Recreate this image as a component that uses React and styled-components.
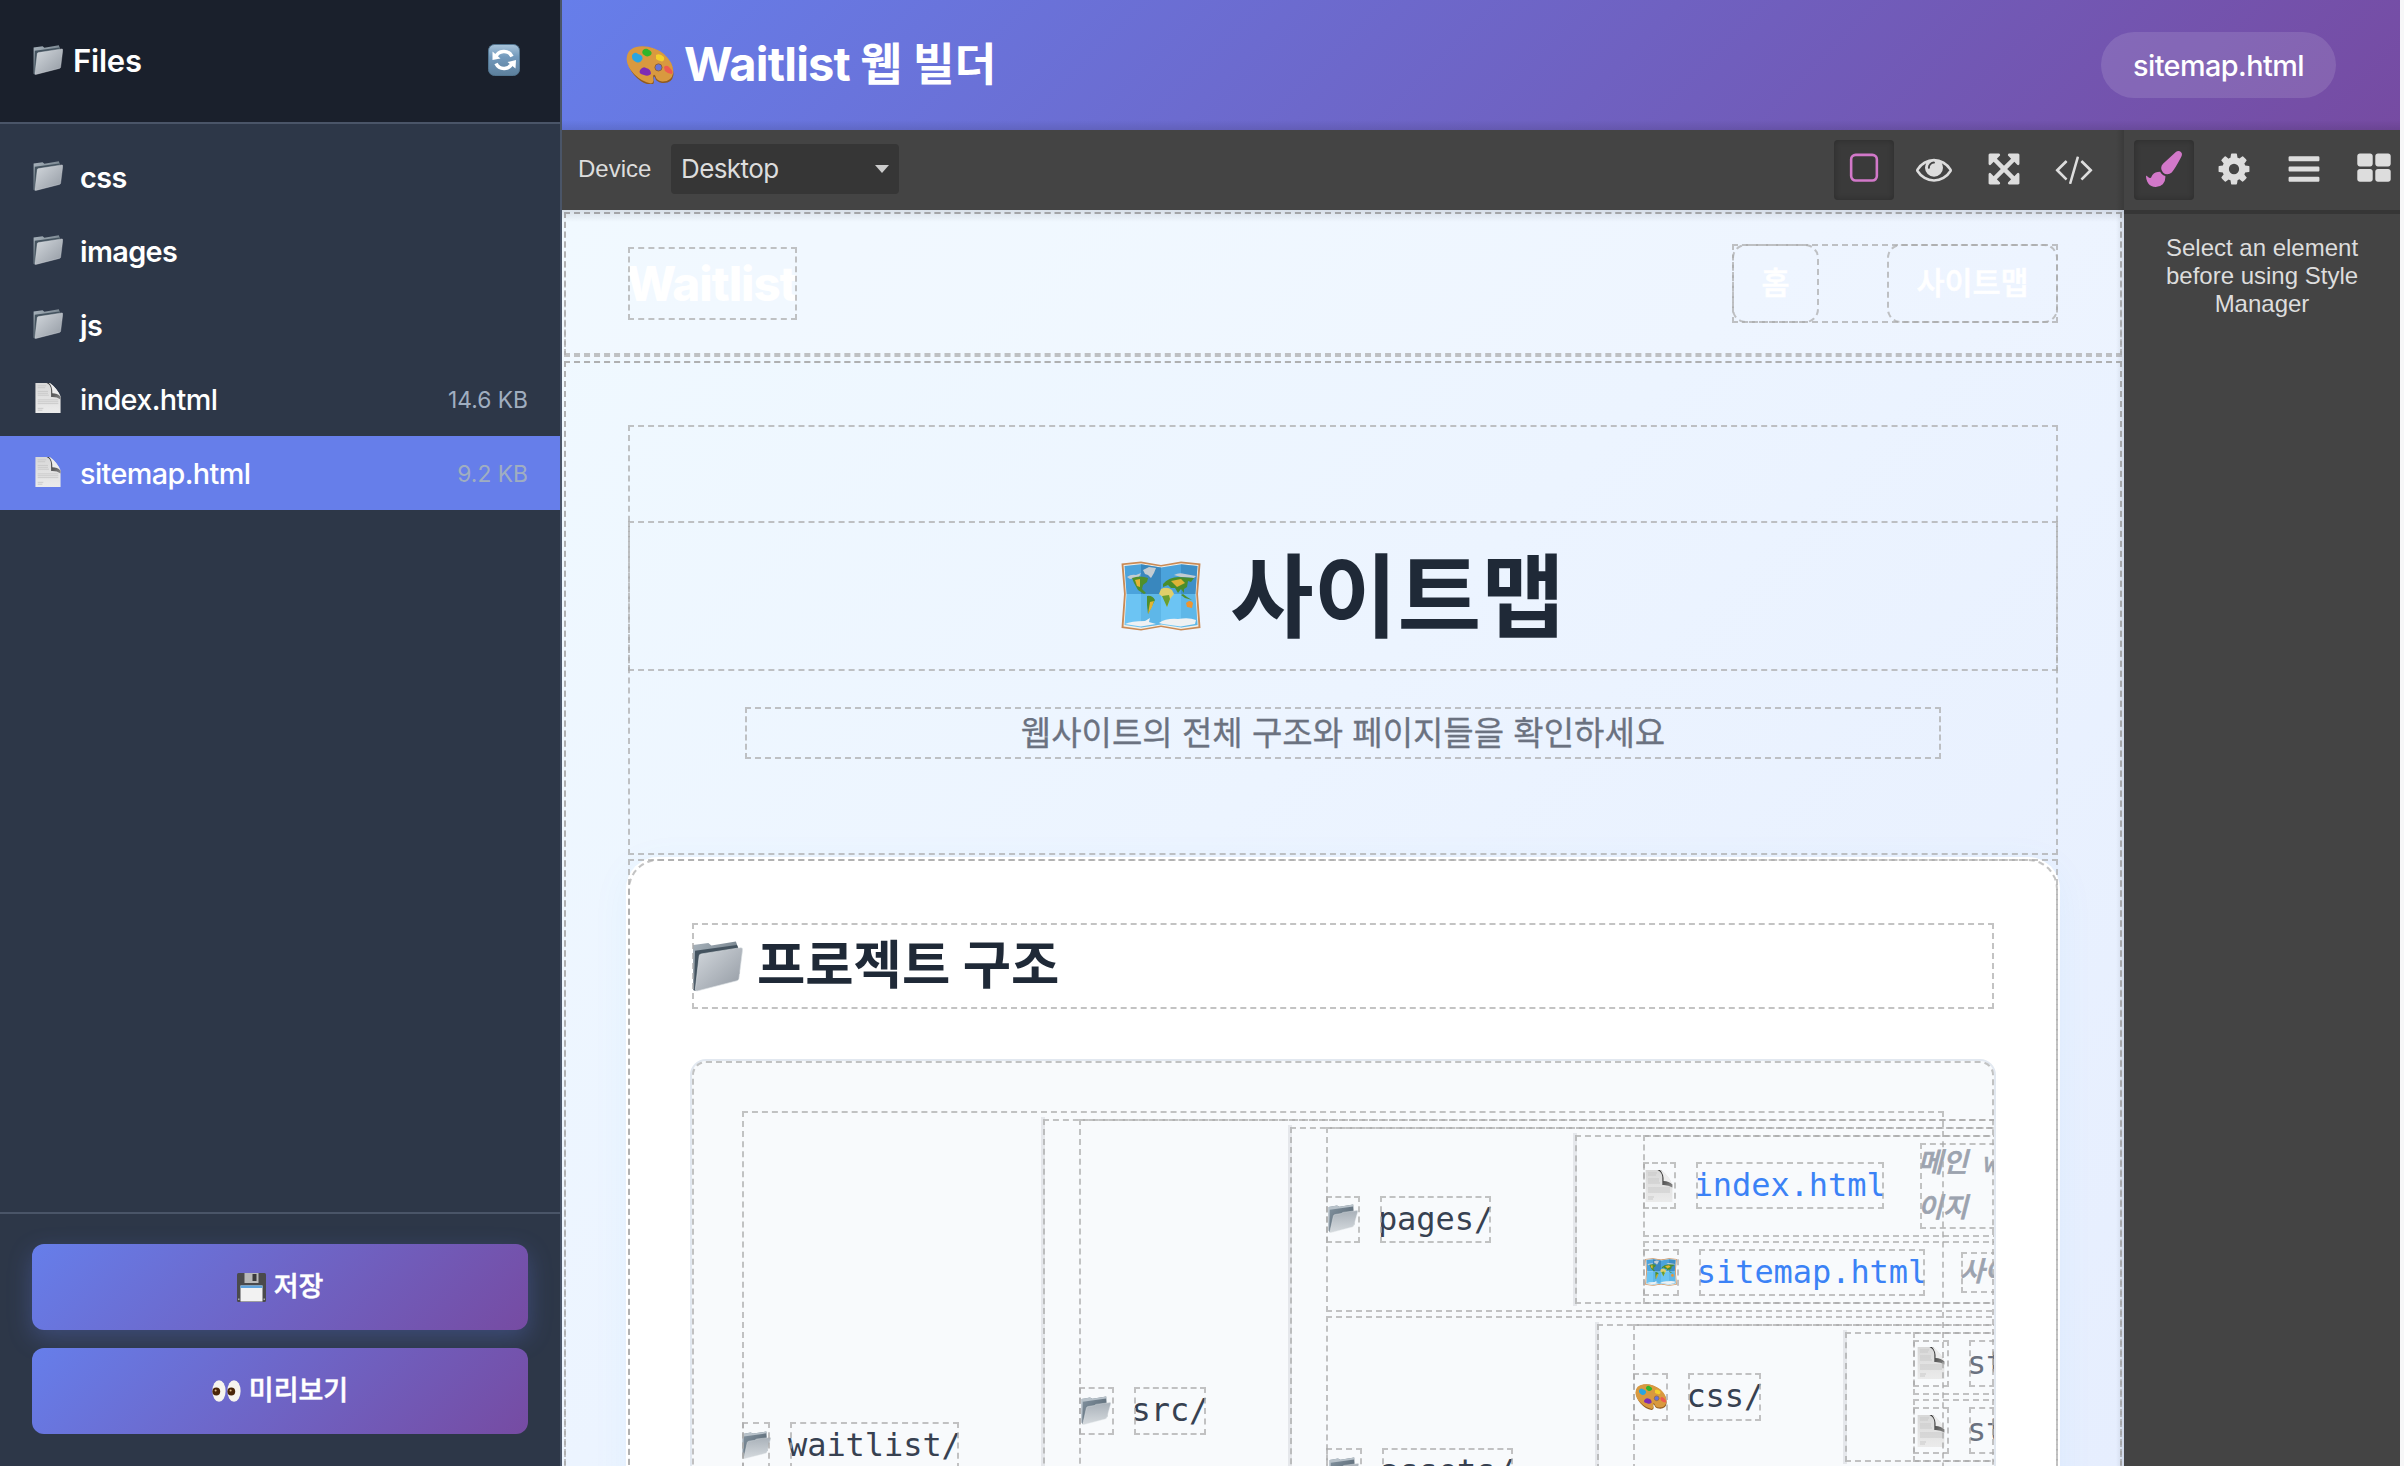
import React from "react";
import styled, { createGlobalStyle, css } from "styled-components";

const ui = `Inter, "Noto Sans CJK KR", sans-serif`;
const mono = `"DejaVu Sans Mono", "Noto Sans CJK KR", monospace`;
const helv = `"Liberation Sans", Arial, sans-serif`;

const Global = createGlobalStyle`
  * { box-sizing: border-box; }
  html, body { margin: 0; padding: 0; background: #f7f7f8; }
  body { width: 2404px; height: 1466px; overflow: hidden; font-family: ${ui}; }
  svg { display: block; flex: none; }
`;

const dashed = css`
  outline: 2px dashed rgba(170, 170, 170, 0.7);
  outline-offset: -4px;
`;

/* ---------- pictograms ---------- */

const FolderIcon = ({ size = 30 }) => (
  <svg width={size} height={size} viewBox="0 0 50 50">
    <defs>
      <linearGradient id="fFront" x1="0" y1="0" x2="1" y2="1">
        <stop offset="0" stopColor="#d3d8dd" />
        <stop offset="1" stopColor="#9299a2" />
      </linearGradient>
      <linearGradient id="fBack" x1="0" y1="0" x2="1" y2="1">
        <stop offset="0" stopColor="#a9b4bd" />
        <stop offset="1" stopColor="#4f5d68" />
      </linearGradient>
    </defs>
    <path d="M1 4L16 2L19 4.500L43 .5L45 6L47 32L3 49L1 48Z" fill="url(#fBack)" />
    <path d="M3 9.500L44 4L46 8L8 14L4 49L2 48Z" fill="#44535f" />
    <path d="M7 15Q7 13 9 12.700L48 6.500Q49.800 6.500 49.600 8.500L46 37Q45.800 38.500 44 39L5 49Q3 49.500 3.300 47Z" fill="url(#fFront)" stroke="#dce1e5" strokeWidth=".6" />
  </svg>
);

const OpenFolderIcon = ({ size = 30 }) => (
  <svg width={size} height={size} viewBox="0 0 50 50">
    <defs>
      <linearGradient id="oBack" x1="0" y1="0" x2="1" y2="1">
        <stop offset="0" stopColor="#8595a2" />
        <stop offset="1" stopColor="#4c5a66" />
      </linearGradient>
      <linearGradient id="oFront" x1="0" y1="0" x2="0" y2="1">
        <stop offset="0" stopColor="#a9b1b9" />
        <stop offset="1" stopColor="#d5dade" />
      </linearGradient>
    </defs>
    <path d="M1 5L15 2.500L19 4.500L42 1L44 34L3 47L1 44Z" fill="url(#oBack)" />
    <path d="M1 5L15 2.500L19 4.500L42 1L42 4L3 9.500L2 46L1 44Z" fill="#b8c2ca" />
    <path d="M9 20Q9.500 18 12 17.500L22 16L25 14L48 11Q50 11 49.500 13L43 36Q42.500 38 40 38.500L5 47.500Q2.500 48 3 46Z" fill="url(#oFront)" stroke="#e2e6e9" strokeWidth=".7" />
  </svg>
);

const PageIcon = ({ size = 32 }) => (
  <svg width={size} height={size} viewBox="0 0 32 32">
    <defs>
      <linearGradient id="pCurl" x1="0" y1="0" x2="1" y2="1">
        <stop offset="0" stopColor="#333" />
        <stop offset=".55" stopColor="#555" />
        <stop offset="1" stopColor="#8a8a8a" />
      </linearGradient>
      <linearGradient id="pPaper" x1="0" y1="0" x2="0" y2="1">
        <stop offset="0" stopColor="#d8d8d8" />
        <stop offset="1" stopColor="#ebebeb" />
      </linearGradient>
    </defs>
    <path d="M2.600 0H18Q26 6 29.400 14.500V32H2.600Z" fill="url(#pPaper)" />
    <path d="M5 3H14M5 5H13M5 9H16M5 11H16M5 13H17M5 18H27M5 20H27M5 22H27M5 27H11M5 29H10" stroke="#c9c9c9" strokeWidth="1" />
    <path d="M14.500 0H18L29.400 14.500V17.500Q25 14.500 19.300 15V7Q19 2 14.500 0Z" fill="url(#pCurl)" />
    <path d="M17 0H18Q26 6 29.400 14.500Q26 11 20.600 11Q21 4 17 0Z" fill="#ededed" />
  </svg>
);

const RefreshIcon = () => (
  <svg width="32" height="32" viewBox="0 0 32 32">
    <defs>
      <linearGradient id="rBg" x1="0" y1="0" x2="0" y2="1">
        <stop offset="0" stopColor="#a9c4da" />
        <stop offset=".4" stopColor="#7299bc" />
        <stop offset="1" stopColor="#5c7f9c" />
      </linearGradient>
    </defs>
    <rect x=".5" y=".5" width="31" height="31" rx="6" fill="url(#rBg)" stroke="#527590" />
    <path d="M7.500 13.500A9 9 0 0 1 24 12.500M24.500 18.500A9 9 0 0 1 8 19.500" fill="none" stroke="#fff" strokeWidth="3.600" />
    <path d="M4.500 7.500L4.500 16L12.500 14.500ZM27.500 24.500L28 16L19.500 18Z" fill="#fff" />
  </svg>
);

const PaletteIcon = ({ size = 48 }) => (
  <svg width={size} height={size * 0.81} viewBox="0 0 48 39">
    <path d="M1.500 14Q1 3 13 1Q26 -1 38 9Q48 18 47.500 29Q46 38 36 37Q30 36 29 31.500Q27 29 27.500 34Q29 38.500 25 39Q16 38 8 29Q2 22 1.500 14Z" fill="#8f5a22" />
    <path d="M.5 13Q1 2 13 .5Q26 -1 38 8Q48 17 47.300 27Q45.500 36 36 35.500Q30 34.500 29.500 30Q27 27 27 32Q28.500 37 25 37.500Q16 36 8 28Q1 21 .5 13Z" fill="#d9993f" />
    <circle cx="32.500" cy="21.500" r="3.600" fill="#6673d8" stroke="#8f5a22" strokeWidth=".8" />
    <path d="M6 9Q9 5 12 8Q17 9 16.500 13Q14 18 10 16Q5 14 6 9Z" fill="#2aa5e0" />
    <path d="M17 4Q20 1.500 23 4Q27 6 25 9Q21 12 18 9Q15 7 17 4Z" fill="#2fb52a" />
    <path d="M30 9Q34 7 38 11Q39 15 36 15.500Q32 15 30 13Z" fill="#f4cf2b" />
    <path d="M38 21Q41 18 44 22Q48 26 46 28Q42 28 39 25Z" fill="#ee5a4f" />
    <path d="M14 24Q17 20 20 22Q25 23 25 28Q22 31 18 29Q12 28 14 24Z" fill="#7d2bb5" />
  </svg>
);

const MapIcon = ({ size = 80 }) => (
  <svg width={size} height={size * 0.875} viewBox="0 0 80 70">
    <path d="M.5 2.500L20 .5L40 4L60 .5L79.500 2.500L77 33L79.500 67L60 69.500L40 66L20 69.500L.5 67L3 33Z" fill="#c98a55" />
    <path d="M2.500 4L20 2.200L40 5.500L60 2.200L77.500 4L75.200 33L77.500 65.500L60 68L40 64.500L20 68L2.500 65.500L4.800 33Z" fill="#f3efe6" />
    <path d="M3.500 5L20 3.200L40 6.500L60 3.200L76.500 5L74.500 33H5.500Z" fill="#4ba3dc" />
    <path d="M5.500 33H74.500L76.500 64L60 66.500L40 63.500L20 66.500L3.500 64Z" fill="#6cc4f3" />
    <path d="M20 3.200L40 6.500V33H20Z" fill="#2f78ad" opacity=".65" />
    <path d="M60 3.200L76.500 5L74.500 33H60Z" fill="#2f78ad" opacity=".45" />
    <path d="M20 33H40V63.500L20 66.500ZM60 33H74.500L76.500 64L60 66.500Z" fill="#3f98cf" opacity=".3" />
    <path d="M6 16Q10 13 15 14L20 12L18 16L9 18ZM22 9L28 6L35 7L33 12L30 17L27 14L24 13ZM53 14Q58 11 64 13L75 15L73 17L60 16Z" fill="#c3ccd2" />
    <path d="M11 17Q19 14 27 17L26 21L22 24L21 28L25 32L23 33L17 29L13 22Z" fill="#4f8f2c" />
    <path d="M14 19L19 18L19 26L16 25Z" fill="#e3b433" />
    <path d="M26 35Q31 34 34 39L31 45L27 53L26 44Z" fill="#4f8f2c" />
    <path d="M29 41L33 40L31 46L27 53Z" fill="#e3b433" />
    <path d="M42 23Q48 16 58 16L73 17L70 21L67 20L66 26L63 28L63 32L60 28L57 32L54 27L50 27L47 24L42 26Z" fill="#4a8d2c" />
    <path d="M50 20L60 18L64 22L56 26Z" fill="#dfb436" />
    <path d="M40 28Q46 25 51 29L53 33L49 38L46 46L43 37L38 33Z" fill="#e0cf6a" />
    <path d="M41 35L48 34L49 38L46 46Z" fill="#6a9e2e" />
    <path d="M65 42Q69 38 72 42L71 47L66 46Z" fill="#f0942e" />
    <path d="M60 34L64 37L71 39L66 36L62 33Z" fill="#4f8f2c" />
    <path d="M4 63Q10 60 24 60L29 57L28 61L35 63L20 65.500ZM38 62Q45 57 57 58Q68 56 75 59L74 63L60 65.500L42 63Z" fill="#eef1f3" />
  </svg>
);

const FloppyIcon = () => (
  <svg width="29" height="29" viewBox="0 0 29 29">
    <rect x="0" y="0" width="29" height="29" rx="1.500" fill="#4a4a4c" />
    <rect x="7.500" y="0" width="14" height="10" fill="#b9b9b9" />
    <rect x="15.500" y="1" width="4" height="7" fill="#3a3a3c" />
    <rect x="3.500" y="12.500" width="22" height="16" fill="#f2f2f2" />
    <rect x="3.500" y="12.500" width="22" height="2.500" fill="#5fa3dd" />
    <path d="M1 25.500H2.500V27H1ZM26.500 25.500H28V27H26.500Z" fill="#aaa" />
  </svg>
);

const EyesIcon = () => (
  <svg width="29" height="22" viewBox="0 0 29 22">
    <ellipse cx="7" cy="11" rx="6.600" ry="10.800" fill="#f6f3ee" />
    <ellipse cx="22" cy="11" rx="6.600" ry="10.800" fill="#f6f3ee" />
    <circle cx="4.300" cy="11.500" r="3.900" fill="#4a2508" />
    <circle cx="19.300" cy="11.500" r="3.900" fill="#4a2508" />
    <circle cx="3.600" cy="10.500" r="1" fill="#d9b98c" />
    <circle cx="18.600" cy="10.500" r="1" fill="#d9b98c" />
  </svg>
);

const glyphs = {
  square: "M1312 256h-832q-66 0-113 47t-47 113v832q0 66 47 113t113 47h832q66 0 113-47t47-113v-832q0-66-47-113t-113-47zm288 160v832q0 119-84.5 203.5t-203.5 84.5h-832q-119 0-203.5-84.5t-84.5-203.5v-832q0-119 84.5-203.5t203.5-84.5h832q119 0 203.5 84.5t84.5 203.5z",
  eye: "M1664 960q-152-236-381-353 61 104 61 225 0 185-131.5 316.5t-316.5 131.5-316.5-131.5-131.5-316.5q0-121 61-225-229 117-381 353 133 205 333.5 326.5t434.5 121.5 434.5-121.5 333.5-326.5zm-720-384q0-20-14-34t-34-14q-125 0-214.5 89.5t-89.5 214.5q0 20 14 34t34 14 34-14 14-34q0-86 61-147t147-61q20 0 34-14t14-34zm848 384q0 34-20 69-140 230-376.5 368.5t-499.5 138.5-499.5-139-376.5-368q-20-35-20-69t20-69q140-229 376.5-368t499.5-139 499.5 139 376.5 368q20 35 20 69z",
  arrows: "M1411 541l-355 355 355 355 144-144q29-31 70-14 39 17 39 59v448q0 26-19 45t-45 19h-448q-42 0-59-40-17-39 14-69l144-144-355-355-355 355 144 144q31 30 14 69-17 40-59 40h-448q-26 0-45-19t-19-45v-448q0-42 40-59 39-17 69 14l144 144 355-355-355-355-144 144q-19 19-45 19-12 0-24-5-40-17-40-59v-448q0-26 19-45t45-19h448q42 0 59 40 17 39-14 69l-144 144 355 355 355-355-144-144q-31-30-14-69 17-40 59-40h448q26 0 45 19t19 45v448q0 42-39 59-13 5-25 5-26 0-45-19z",
  code: "M553 1399l-50 50q-10 10-23 10t-23-10l-466-466q-10-10-10-23t10-23l466-466q10-10 23-10t23 10l50 50q10 10 10 23t-10 23l-393 393 393 393q10 10 10 23t-10 23zm591-1067l-373 1291q-4 13-15.5 19.5t-23.5 2.5l-62-17q-13-4-19.5-15.5t-2.500-24.5l373-1291q4-13 15.5-19.5t23.5-2.500l62 17q13 4 19.5 15.5t2.500 24.5zm657 651l-466 466q-10 10-23 10t-23-10l-50-50q-10-10-10-23t10-23l393-393-393-393q-10-10-10-23t10-23l50-50q10-10 23-10t23 10l466 466q10 10 10 23t-10 23z",
  brush: "M1615 0q70 0 122.5 46.5t52.5 116.5q0 63-45 151-332 629-465 752-97 91-218 91-126 0-216.5-92.5t-90.5-219.5q0-128 92-212l638-579q59-54 130-54zm-909 1034q39 76 106.5 130t150.5 76l1 71q4 213-129.5 347t-348.5 134q-123 0-218-46.5t-152.5-127.5-86.5-183-29-220q7 5 41 30t62 44.5 59 36.5 46 17q41 0 55-37 25-66 57.5-112.5t69.5-76 88-47.5 103-25.5 125-10.5z",
  cog: "M1152 896q0-106-75-181t-181-75-181 75-75 181 75 181 181 75 181-75 75-181zm512-109v222q0 12-8 23t-20 13l-185 28q-19 54-39 91 35 50 107 138 10 12 10 25t-9 23q-27 37-99 108t-94 71q-12 0-26-9l-138-108q-44 23-91 38-16 136-29 186-7 28-36 28h-222q-14 0-24.5-8.5t-11.5-21.5l-28-184q-49-16-90-37l-141 107q-10 9-25 9-14 0-25-11-126-114-165-168-7-10-7-23 0-12 8-23 15-21 51-66.5t54-70.5q-27-50-41-99l-183-27q-13-2-21-12.5t-8-23.5v-222q0-12 8-23t19-13l186-28q14-46 39-92-40-57-107-138-10-12-10-24 0-10 9-23 26-36 98.5-107.5t94.5-71.5q13 0 26 10l138 107q44-23 91-38 16-136 29-186 7-28 36-28h222q14 0 24.5 8.5t11.5 21.5l28 184q49 16 90 37l142-107q9-9 24-9 13 0 25 10 129 119 165 170 7 8 7 22 0 12-8 23-15 21-51 66.5t-54 70.5q26 50 41 98l183 28q13 2 21 12.5t8 23.5z",
  bars: "M1664 1344v128q0 26-19 45t-45 19h-1408q-26 0-45-19t-19-45v-128q0-26 19-45t45-19h1408q26 0 45 19t19 45zm0-512v128q0 26-19 45t-45 19h-1408q-26 0-45-19t-19-45v-128q0-26 19-45t45-19h1408q26 0 45 19t19 45zm0-512v128q0 26-19 45t-45 19h-1408q-26 0-45-19t-19-45v-128q0-26 19-45t45-19h1408q26 0 45 19t19 45z",
  blocks: "M832 1024v384q0 52-38 90t-90 38h-512q-52 0-90-38t-38-90v-384q0-52 38-90t90-38h512q52 0 90 38t38 90zm0-768v384q0 52-38 90t-90 38h-512q-52 0-90-38t-38-90v-384q0-52 38-90t90-38h512q52 0 90 38t38 90zm896 768v384q0 52-38 90t-90 38h-512q-52 0-90-38t-38-90v-384q0-52 38-90t90-38h512q52 0 90 38t38 90zm0-768v384q0 52-38 90t-90 38h-512q-52 0-90-38t-38-90v-384q0-52 38-90t90-38h512q52 0 90 38t38 90z",
};

/* ---------- shell ---------- */

const Shell = styled.div`
  display: flex;
  width: 2400px;
  height: 1466px;
  overflow: hidden;
`;

const Sidebar = styled.aside`
  display: flex;
  flex-direction: column;
  width: 562px;
  flex: none;
  background: #2d3748;
  border-right: 2px solid #4a5568;
  color: #fff;
`;

const SidebarHead = styled.div`
  display: flex;
  align-items: center;
  justify-content: space-between;
  height: 124px;
  padding: 0 40px 2px 33px;
  background: #1a202c;
  border-bottom: 2px solid #4a5568;
`;

const SidebarTitle = styled.h3`
  display: flex;
  align-items: center;
  gap: 10px;
  margin: 0;
  font-size: 31px;
  font-weight: 600;
  letter-spacing: -0.2px;
`;

const FileList = styled.div`
  flex: 1;
  padding-top: 16px;
`;

const FileRow = styled.div`
  display: flex;
  align-items: center;
  height: 74px;
  padding: 0 32px 0 33px;
  background: ${(p) => (p.$active ? "#667eea" : "transparent")};
  svg { margin: 0 17px 3px 0; }
`;

const FileName = styled.span`
  flex: 1;
  font-size: 28.800px;
  line-height: 36px;
  padding-top: 2px;
  font-weight: ${(p) => (p.$folder ? 600 : 500)};
  letter-spacing: -0.6px;
`;

const FileSize = styled.span`
  padding-top: 1px;
  font-size: 22.800px;
  color: #a0aec0;
`;

const SidebarFoot = styled.div`
  display: flex;
  flex-direction: column;
  gap: 18px;
  height: 254px;
  padding: 30px 32px;
  border-top: 2px solid #4a5568;
`;

const ActionButton = styled.button`
  display: flex;
  align-items: center;
  justify-content: center;
  gap: 8px;
  height: 86px;
  flex: none;
  border: 0;
  border-radius: 12px;
  background: linear-gradient(135deg, #667eea 0%, #764ba2 100%);
  box-shadow: ${(p) => (p.$raised ? "0 8px 24px rgba(102, 126, 234, 0.3)" : "none")};
  color: #fff;
  font: 500 27px/36px ${ui};
  -webkit-text-stroke: 0.5px currentColor;
  position: relative;
  z-index: ${(p) => (p.$raised ? 0 : 1)};
`;

const Main = styled.div`
  display: flex;
  flex-direction: column;
  width: 1838px;
  flex: none;
`;

const TopBar = styled.header`
  display: flex;
  align-items: center;
  justify-content: space-between;
  height: 130px;
  padding: 0 64px;
  background: linear-gradient(to top, rgba(0, 0, 0, 0.1), transparent 10px),
    linear-gradient(135deg, #667eea 0%, #764ba2 100%);
  color: #fff;
`;

const AppTitle = styled.h1`
  display: flex;
  align-items: center;
  gap: 10px;
  margin: 0;
  font-size: 47px;
  font-weight: 700;
  line-height: 60px;
  letter-spacing: -0.800px;
`;

const TitleText = styled.span`
  height: 60px;
  margin-top: -3px;
`;

const Hangul = styled.span`
  font-size: 0.97em;
  letter-spacing: -0.2px;
`;

const CurrentFile = styled.span`
  display: flex;
  align-items: center;
  justify-content: center;
  width: 235px;
  height: 66px;
  border-radius: 33px;
  background: rgba(255, 255, 255, 0.12);
  font-size: 28.800px;
  font-weight: 500;
  letter-spacing: -0.55px;
`;

const Editor = styled.div`
  display: flex;
  height: 1336px;
`;

const Stage = styled.div`
  display: flex;
  flex-direction: column;
  width: 1562px;
  flex: none;
`;

const Toolbar = styled.div`
  display: flex;
  align-items: center;
  height: 80px;
  flex: none;
  padding: 0 20px 0 16px;
  background: linear-gradient(to left, rgba(0, 0, 0, 0.14), transparent 8px), #444;
  color: #ddd;
`;

const DeviceLabel = styled.span`
  width: 93px;
  padding-bottom: 3px;
  font: 24px/30px ${helv};
`;

const DeviceSelect = styled.div`
  display: flex;
  align-items: center;
  justify-content: space-between;
  width: 228px;
  height: 50px;
  margin: 0 auto 2px 0;
  padding: 0 10px 1px 10px;
  border-radius: 4px;
  background: #363636;
  font-size: 26px;
  letter-spacing: -0.6px;
`;

const ToolGroup = styled.div`
  display: flex;
  gap: 10px;
`;

const ToolButton = styled.span`
  display: flex;
  justify-content: center;
  width: 60px;
  height: 60px;
  padding-top: 11px;
  flex: none;
  border-radius: 4px;
  color: ${(p) => (p.$active ? "#d278c9" : "#ddd")};
  ${(p) =>
    p.$active &&
    css`
      background: #3a3a3a;
      box-shadow: inset 0 0 6px rgba(0, 0, 0, 0.25);
    `}
`;

const Tool = ({ name, active }) => (
  <ToolButton $active={active}>
    <svg width="36" height="36" viewBox="0 0 1792 1792" overflow="visible" fill="currentColor">
      <path d={glyphs[name]} />
    </svg>
  </ToolButton>
);

const StylePanel = styled.aside`
  width: 276px;
  flex: none;
  background: #444;
  color: #ddd;
`;

const PanelTabs = styled.div`
  display: flex;
  gap: 10px;
  height: 84px;
  padding: 10px 0 0 10px;
  overflow: hidden;
  border-bottom: 4px solid #363636;
`;

const PanelHint = styled.p`
  margin: 0;
  padding: 20px 30px 0;
  text-align: center;
  white-space: nowrap;
  font: 24px/28px ${helv};
`;

/* ---------- edited page ---------- */

const Canvas = styled.div`
  height: 1256px;
  overflow: hidden;
  position: relative;
  background: linear-gradient(135deg, #f0f9ff 0%, #ecf4ff 45%, #e6eefe 100%);
  &::after {
    content: "";
    position: absolute;
    inset: 0;
    background: linear-gradient(to bottom, rgba(60, 70, 90, 0.14), transparent 12px),
      linear-gradient(to left, rgba(60, 70, 90, 0.14), transparent 8px);
    pointer-events: none;
  }
`;

const PageHeader = styled.div`
  ${dashed}
  height: 149px;
  background: rgba(255, 255, 255, 0.12);
`;

const PageNav = styled.div`
  ${dashed}
  display: flex;
  align-items: center;
  justify-content: space-between;
  height: 147px;
  padding: 0 64px;
`;

const Brand = styled.div`
  ${dashed}
  width: 173px;
  height: 77px;
  color: #fff;
  white-space: nowrap;
  font-size: 47.500px;
  font-weight: 800;
  line-height: 77px;
  letter-spacing: -1.100px;
`;

const NavLinks = styled.div`
  ${dashed}
  display: flex;
  gap: 64px;
  height: 83px;
`;

const NavLink = styled.a`
  ${dashed}
  display: flex;
  align-items: center;
  justify-content: center;
  width: ${(p) => p.$w}px;
  padding-bottom: 5px;
  border-radius: 16px;
  color: #fff;
  font-size: 30.500px;
  font-weight: 500;
  -webkit-text-stroke: 0.6px currentColor;
`;

const PageMain = styled.div`
  ${dashed}
  height: 2200px;
`;

const PageSection = styled.div`
  ${dashed}
  height: 2236px;
  padding: 64px 64px 0;
`;

const Hero = styled.div`
  ${dashed}
  height: 434px;
  padding-top: 96px;
`;

const HeroTitle = styled.h1`
  ${dashed}
  display: flex;
  align-items: center;
  justify-content: center;
  gap: 29px;
  height: 154px;
  margin: 0 0 32px;
  color: #1f2937;
  font-size: 91px;
  font-weight: 700;
  line-height: 130px;
`;

const HeroWord = styled.span`
  margin-top: 1px;
`;

const HeroText = styled.p`
  ${dashed}
  width: 1200px;
  height: 56px;
  margin: 0 auto;
  color: #6b7280;
  text-align: center;
  font-size: 33px;
  line-height: 56px;
  -webkit-text-stroke: 0.3px currentColor;
`;

const CardSlot = styled.div`
  ${dashed}
  height: 1400px;
`;

const Card = styled.div`
  ${dashed}
  height: 1300px;
  padding: 64px;
  border-radius: 32px;
  background: #fff;
  box-shadow: 0 8px 40px rgba(14, 165, 233, 0.05);
`;

const CardTitle = styled.h2`
  ${dashed}
  display: flex;
  align-items: center;
  gap: 14px;
  height: 90px;
  margin: 0 0 48px;
  padding-left: 2px;
  color: #1f2937;
  font-size: 52.500px;
  font-weight: 700;
  line-height: 76px;
`;

const CardTitleText = styled.span`
  margin-top: -3px;
`;

const TreeBox = styled.div`
  ${dashed}
  height: 1000px;
  padding: 48px;
  overflow: hidden;
  border: 2px solid #e2e8f0;
  border-radius: 16px;
  background: #f8fafc;
  font-family: ${mono};
  font-size: 32px;
  line-height: 51px;
`;

const Node = styled.div`
  ${dashed}
  display: flex;
  align-items: center;
  width: ${(p) => p.$w || 1100}px;
  padding: 8px 0;
  margin-left: ${(p) => (p.$file ? 32 : 0)}px;
`;

const NodeIcon = styled.span`
  ${dashed}
  display: flex;
  align-items: center;
  justify-content: center;
  width: ${(p) => p.$w}px;
  height: 51.200px;
  margin-right: 16px;
  flex: none;
`;

const NodeLabel = styled.span`
  ${dashed}
  flex: none;
  height: 51.200px;
  color: ${(p) => p.$color || "#374151"};
  letter-spacing: -0.065px;
`;

const Note = styled.span`
  ${dashed}
  flex: none;
  margin-left: 32px;
  color: #9ca3af;
  font-size: 27.200px;
  font-style: italic;
  font-weight: 500;
  line-height: 44.800px;
  white-space: pre;
  -webkit-text-stroke: 0.7px currentColor;
`;

const Branch = styled.div`
  ${dashed}
  flex: none;
  height: ${(p) => (p.$h ? `${p.$h}px` : "auto")};
  margin-left: 80px;
  padding-left: 32px;
  border-left: 4px solid #e5e7eb;
`;

const Tree = () => (
  <TreeBox>
    <Node $w={1206}>
      <NodeIcon $w={32}><OpenFolderIcon size={29} /></NodeIcon>
      <NodeLabel>waitlist/</NodeLabel>
      <Branch $h={657}>
        <Node>
          <NodeIcon $w={38.700}><OpenFolderIcon /></NodeIcon>
          <NodeLabel>src/</NodeLabel>
          <Branch $h={572}>
            <Node>
              <NodeIcon $w={37.600}><OpenFolderIcon /></NodeIcon>
              <NodeLabel>pages/</NodeLabel>
              <Branch>
                <Node $file>
                  <NodeIcon $w={36.500}><PageIcon /></NodeIcon>
                  <NodeLabel $color="#3b82f6">index.html</NodeLabel>
                  <Note>{"메인 waitlist 페\n이지"}</Note>
                </Node>
                <Node $file>
                  <NodeIcon $w={39.700}><MapIcon size={32} /></NodeIcon>
                  <NodeLabel $color="#3b82f6">sitemap.html</NodeLabel>
                  <Note>사이트맵</Note>
                </Node>
              </Branch>
            </Node>
            <Node>
              <NodeIcon $w={40}><OpenFolderIcon /></NodeIcon>
              <NodeLabel>assets/</NodeLabel>
              <Branch $h={300}>
                <Node>
                  <NodeIcon $w={39.700}><PaletteIcon size={32} /></NodeIcon>
                  <NodeLabel>css/</NodeLabel>
                  <Branch>
                    <Node $file>
                      <NodeIcon $w={39.700}><PageIcon /></NodeIcon>
                      <NodeLabel $color="#6b7280">styles.css</NodeLabel>
                    </Node>
                    <Node $file>
                      <NodeIcon $w={39.700}><PageIcon /></NodeIcon>
                      <NodeLabel $color="#6b7280">style.css</NodeLabel>
                    </Node>
                  </Branch>
                </Node>
              </Branch>
            </Node>
          </Branch>
        </Node>
      </Branch>
    </Node>
  </TreeBox>
);

const files = [
  { name: "css", folder: true },
  { name: "images", folder: true },
  { name: "js", folder: true },
  { name: "index.html", size: "14.6 KB" },
  { name: "sitemap.html", size: "9.2 KB", active: true },
];

export default function App() {
  return (
    <>
      <Global />
      <Shell>
        <Sidebar>
          <SidebarHead>
            <SidebarTitle><FolderIcon />Files</SidebarTitle>
            <RefreshIcon />
          </SidebarHead>
          <FileList>
            {files.map((f) => (
              <FileRow key={f.name} $active={f.active}>
                {f.folder ? <FolderIcon /> : <PageIcon size={30} />}
                <FileName $folder={f.folder}>{f.name}</FileName>
                {f.size && <FileSize>{f.size}</FileSize>}
              </FileRow>
            ))}
          </FileList>
          <SidebarFoot>
            <ActionButton $raised><FloppyIcon />저장</ActionButton>
            <ActionButton><EyesIcon />미리보기</ActionButton>
          </SidebarFoot>
        </Sidebar>
        <Main>
          <TopBar>
            <AppTitle>
              <PaletteIcon />
              <TitleText>Waitlist <Hangul>웹 빌더</Hangul></TitleText>
            </AppTitle>
            <CurrentFile>sitemap.html</CurrentFile>
          </TopBar>
          <Editor>
            <Stage>
              <Toolbar>
                <DeviceLabel>Device</DeviceLabel>
                <DeviceSelect>
                  Desktop
                  <svg width="14" height="8" viewBox="0 0 14 8"><path d="M0 0H14L7 8Z" fill="#ccc" /></svg>
                </DeviceSelect>
                <ToolGroup>
                  <Tool name="square" active />
                  <Tool name="eye" />
                  <Tool name="arrows" />
                  <Tool name="code" />
                </ToolGroup>
              </Toolbar>
              <Canvas>
                <PageHeader>
                  <PageNav>
                    <Brand>Waitlist</Brand>
                    <NavLinks>
                      <NavLink $w={91}>홈</NavLink>
                      <NavLink $w={175}>사이트맵</NavLink>
                    </NavLinks>
                  </PageNav>
                </PageHeader>
                <PageMain>
                  <PageSection>
                    <Hero>
                      <HeroTitle><MapIcon /><HeroWord>사이트맵</HeroWord></HeroTitle>
                      <HeroText>웹사이트의 전체 구조와 페이지들을 확인하세요</HeroText>
                    </Hero>
                    <CardSlot>
                      <Card>
                        <CardTitle>
                          <FolderIcon size={51} />
                          <CardTitleText>프로젝트 구조</CardTitleText>
                        </CardTitle>
                        <Tree />
                      </Card>
                    </CardSlot>
                  </PageSection>
                </PageMain>
              </Canvas>
            </Stage>
            <StylePanel>
              <PanelTabs>
                <Tool name="brush" active />
                <Tool name="cog" />
                <Tool name="bars" />
                <Tool name="blocks" />
              </PanelTabs>
              <PanelHint>Select an element<br />before using Style<br />Manager</PanelHint>
            </StylePanel>
          </Editor>
        </Main>
      </Shell>
    </>
  );
}
